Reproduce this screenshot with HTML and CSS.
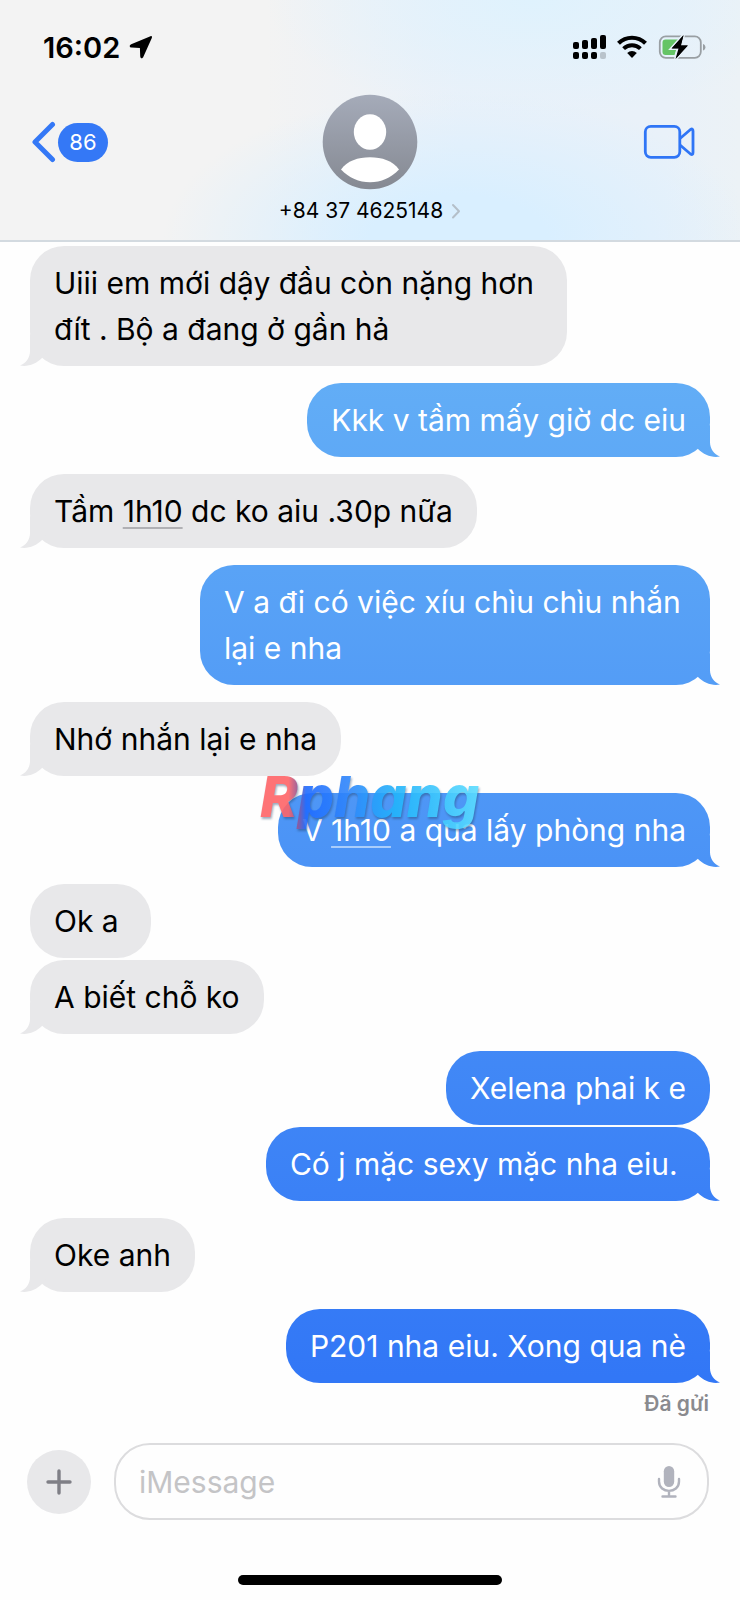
FILE: index.html
```html
<!DOCTYPE html>
<html lang="vi">
<head>
<meta charset="utf-8">
<meta name="viewport" content="width=device-width, initial-scale=1">
<title>+84 37 4625148</title>
<link rel="stylesheet" href="styles.css">
</head>
<body>
<div class="screen">
  <header class="header">
    <div class="status">
      <div class="clock">
        <span>16:02</span>
        <svg width="24" height="24" viewBox="0 0 24 24" aria-hidden="true"><path d="M21.500 1.200 L2.200 9.300 C0 10.500 .4 12.500 2.600 12.600 L10.900 12.900 L11.200 21 C11.300 23.800 13.500 24 14.400 21.800 L22.800 3 C23.300 1.500 22.800 .7 21.500 1.200Z" fill="#000"/></svg>
      </div>
      <div class="indicators">
        <svg width="34" height="26" viewBox="0 0 34 26" aria-hidden="true">
          <rect x="1" y="8" width="6" height="7" rx="2"/><rect x="10" y="6" width="6" height="9" rx="2"/><rect x="19" y="4" width="6" height="11" rx="2"/><rect x="28" y="1" width="6" height="14" rx="2"/>
          <rect x="1" y="18" width="6" height="7" rx="2"/><rect x="10" y="18" width="6" height="7" rx="2"/><rect x="19" y="18" width="6" height="7" rx="2"/><rect x="28" y="18" width="6" height="7" rx="2" fill="#b9c3cb"/>
        </svg>
        <svg width="32" height="24" viewBox="0 0 32 24" aria-hidden="true">
          <path d="M2.500 8.200 A19.500 19.500 0 0 1 29.500 8.200" fill="none" stroke="#000" stroke-width="4.200"/>
          <path d="M7.600 13.600 A12.200 12.200 0 0 1 24.400 13.600" fill="none" stroke="#000" stroke-width="4"/>
          <path d="M11.200 18 A7 7 0 0 1 20.800 18 L16 23Z"/>
        </svg>
        <svg width="48" height="24" viewBox="0 0 48 24" aria-hidden="true">
          <rect x="1.800" y="1.300" width="41" height="21.500" rx="6" fill="none" stroke="#999fa3" stroke-width="1.800"/>
          <path d="M45 9 C48.200 10 48.200 14.500 45 15.500Z" fill="#999fa3"/>
          <path d="M7.500 4.500 H21 L14 13.500 H18.500 L16.500 20 H7.500 Q4.500 20 4.500 17 V7.500 Q4.500 4.500 7.500 4.500Z" fill="#65c466"/>
          <path d="M25.500 0 L13.500 13.500 H20.500 L17.500 24 L30 10.500 H23Z" fill="#000" stroke="#e6f0f8" stroke-width="3" paint-order="stroke"/>
          <path d="M25.500 .5 L14 13.300 H21.500 L18 23.500 L29.500 10.500 H22.500Z" fill="#000"/>
        </svg>
      </div>
    </div>
    <nav class="nav">
      <button class="back" type="button" aria-label="Quay lại, 86 tin nhắn">
        <svg width="24" height="42" viewBox="0 0 24 42" aria-hidden="true"><path d="M20.500 3.500 L3 21 L20.500 38.500" fill="none" stroke="#3478f6" stroke-width="5" stroke-linecap="round" stroke-linejoin="round"/></svg>
        <span class="count">86</span>
      </button>
      <button class="contact" type="button">
        <svg width="96" height="96" viewBox="0 0 96 96" aria-hidden="true">
          <defs><linearGradient id="avatar" x1="0" y1="0" x2="0" y2="1"><stop offset="0" stop-color="#a5abb9"/><stop offset="1" stop-color="#858992"/></linearGradient></defs>
          <circle cx="48" cy="48" r="47.300" fill="url(#avatar)"/>
          <ellipse cx="48" cy="38" rx="16.200" ry="17.800" fill="#fff"/>
          <path d="M19 75.500 C25 67 36 63.300 48 63.300 C60 63.300 71 67 77 75.500 C69 84 59 88.300 48 88.300 C37 88.300 27 84 19 75.500Z" fill="#fff"/>
        </svg>
        <span class="number">+84 37 4625148
          <svg width="10" height="16" viewBox="0 0 10 16" aria-hidden="true"><path d="M2 2 L8 8.200 L2 14.500" fill="none" stroke="#b4bfc9" stroke-width="2" stroke-linecap="round" stroke-linejoin="round"/></svg>
        </span>
      </button>
      <button class="video" type="button" aria-label="FaceTime">
        <svg width="52" height="36" viewBox="0 0 52 36" aria-hidden="true"><g fill="none" stroke="#2f75f6" stroke-width="2.800" stroke-linejoin="round"><rect x="2.300" y="2.300" width="34.500" height="31" rx="5.500"/><path d="M37 14.500 L47.500 5.500 Q50 4 50 7 V28.500 Q50 31.500 47.500 30 L37 21"/></g></svg>
      </button>
    </nav>
  </header>

  <main class="thread">
    <div class="group in"><p class="bubble">Uiii em mới dậy đầu còn nặng hơn đít . Bộ a đang ở gần hả</p></div>
    <div class="group out"><p class="bubble">Kkk v tầm mấy giờ dc eiu</p></div>
    <div class="group in"><p class="bubble">Tầm <a href="#">1h10</a> dc ko aiu .30p nữa</p></div>
    <div class="group out"><p class="bubble">V a đi có việc xíu chìu chìu nhắn lại e nha</p></div>
    <div class="group in"><p class="bubble">Nhớ nhắn lại e nha</p></div>
    <div class="group out marked"><p class="bubble">V <a href="#">1h10</a> a qua lấy phòng nha</p><span class="watermark">Rphang</span></div>
    <div class="group in"><p class="bubble">Ok a&nbsp;</p><p class="bubble">A biết chỗ ko</p></div>
    <div class="group out"><p class="bubble">Xelena phai k e</p><p class="bubble">Có j mặc sexy mặc nha eiu.&nbsp;</p></div>
    <div class="group in"><p class="bubble">Oke anh</p></div>
    <div class="group out"><p class="bubble">P201 nha eiu. Xong qua nè</p></div>
  </main>
  <p class="receipt">Đã gửi</p>

  <form class="composer">
    <button class="add" type="button" aria-label="Thêm"><svg width="26" height="26" viewBox="0 0 26 26" aria-hidden="true"><path d="M13 2 V24 M2 13 H24" stroke="#7f7f86" stroke-width="3.400" stroke-linecap="round"/></svg></button>
    <div class="field">
      <input type="text" aria-label="iMessage" placeholder="iMessage">
      <button class="mic" type="button" aria-label="Đọc chính tả"><svg width="24" height="34" viewBox="0 0 24 34" aria-hidden="true"><rect x="6.800" y="1" width="10.400" height="21" rx="5.200" fill="#b1b3bd"/><path d="M2 14 V16.500 C2 29 22 29 22 16.500 V14 M12 26 V31 M5.500 31.500 H18.500" fill="none" stroke="#b1b3bd" stroke-width="2.400" stroke-linecap="round"/></svg></button>
    </div>
  </form>
  <div class="home"></div>
</div>
</body>
</html>
```
FILE: styles.css
```css
* {
  box-sizing: border-box;
}

body {
  margin: 0;
  background: #fefefe;
  color: #000;
  font-family: Inter, "Noto Sans", sans-serif;
}

button {
  display: flex;
  align-items: center;
  padding: 0;
  border: 0;
  background: none;
  color: inherit;
  font: inherit;
}

p {
  margin: 0;
}

svg {
  flex: none;
}

.screen {
  display: flex;
  flex-direction: column;
  min-height: 100vh;
}

.header {
  padding: 28px 32px 15px;
  border-bottom: 2px solid #d3dae0;
  background:
    radial-gradient(ellipse 40% 62% at 62% 100%, #d9efff 30%, #d9efff00),
    radial-gradient(ellipse 36% 50% at 72% 0, #dff2fd, #dff2fd00),
    linear-gradient(90deg, #f3f3f3 36%, #eaf1f9 62%, #e9f1f9 90%, #ecf2f6);
}

.status {
  display: flex;
  justify-content: space-between;
  align-items: center;
  height: 38px;
  padding: 0 2px 0 11px;
}

.clock {
  display: flex;
  align-items: center;
  gap: 9px;
  font-size: 29px;
  font-weight: 600;
}

.indicators {
  display: flex;
  align-items: center;
  gap: 10px;
}

.nav {
  display: grid;
  grid-template-columns: 1fr auto 1fr;
  align-items: start;
  padding-top: 28px;
}

.back {
  gap: 2px;
  padding-top: 27px;
}

.count {
  width: 50px;
  border-radius: 20px;
  background: #3478f6;
  color: #fff;
  font-size: 22px;
  line-height: 39px;
  text-align: center;
}

.contact {
  flex-direction: column;
  gap: 7px;
}

.number {
  display: flex;
  align-items: center;
  gap: 8px;
  font-size: 21px;
  line-height: 28px;
}

.video {
  justify-self: end;
  padding: 30px 13px 0 0;
}

.thread {
  display: flex;
  flex-direction: column;
  gap: 17px;
  padding: 4px 30px 0;
}

.group {
  display: flex;
  flex-direction: column;
  align-items: flex-start;
  gap: 2px;
}

.out {
  align-items: flex-end;
}

.marked {
  position: relative;
}

.bubble {
  position: relative;
  max-width: 79%;
  padding: 14px 24px;
  border-radius: 34px;
  background: #e8e8ea;
  font-size: 30px;
  line-height: 46px;
}

.out .bubble {
  max-width: 75%;
  background: linear-gradient(#62adf6 24%, #3277f6 86%) fixed;
  color: #fff;
}

.bubble:last-of-type::after {
  content: "";
  position: absolute;
  bottom: 0;
  left: -10px;
  width: 36px;
  height: 36px;
  background: inherit;
  clip-path: path("M10 4 V21 C10 28 6 33 0 35.500 C8 37 16 34 22 28 L30 16Z");
}

.out .bubble:last-of-type::after {
  right: -10px;
  left: auto;
  clip-path: path("M26 4 V21 C26 28 30 33 36 35.500 C28 37 20 34 14 28 L6 16Z");
}

.bubble a {
  color: inherit;
  text-decoration: underline #b0b0b4 2px;
  text-underline-offset: 5px;
}

.out .bubble a {
  text-decoration-color: #a9cdfb;
}

.watermark {
  position: absolute;
  top: -28px;
  left: 230px;
  background: linear-gradient(90deg, #ff6468 13%, #9a5590 17%, #1f6bff 21%, #2f86fb 40%, #22b4fb 62%, #5cdcff);
  background-clip: text;
  color: transparent;
  font-size: 57px;
  font-style: italic;
  font-weight: 800;
  line-height: 64px;
  opacity: 0.9;
  filter: drop-shadow(1px 2px 1px #24446c80);
}

.receipt {
  padding: 7px 31px 0;
  color: #8a8a8e;
  font-size: 21px;
  font-weight: 600;
  line-height: 28px;
  text-align: right;
}

.composer {
  display: flex;
  align-items: center;
  gap: 23px;
  padding: 25px 31px 0 27px;
}

.add {
  flex: none;
  justify-content: center;
  width: 64px;
  height: 64px;
  border-radius: 50%;
  background: #e8e8ea;
}

.field {
  display: flex;
  flex: 1;
  align-items: center;
  height: 77px;
  padding: 0 26px 0 23px;
  border: 2px solid #dcdcde;
  border-radius: 36px;
}

.field input {
  flex: 1;
  min-width: 0;
  padding: 0;
  border: 0;
  outline: 0;
  background: none;
  font: 30px Inter, "Noto Sans", sans-serif;
}

.field input::placeholder {
  color: #c4c4c6;
}

.home {
  width: 264px;
  height: 10px;
  margin: auto auto 15px;
  border-radius: 5px;
  background: #000;
}
```
